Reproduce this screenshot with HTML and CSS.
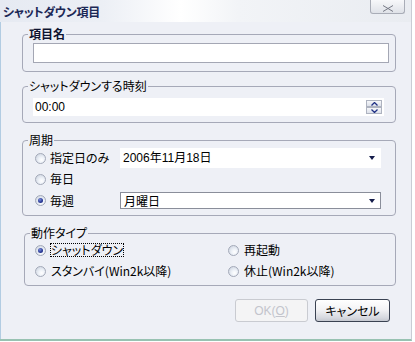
FILE: index.html
```html
<!DOCTYPE html>
<html lang="ja">
<head>
<meta charset="utf-8">
<link rel="stylesheet" href="styles.css">
</head>
<body>
<div class="window">
  <div class="titlebar">
    <span class="title">シャットダウン項目</span>
    <div class="close">
      <svg width="12" height="7" viewBox="0 0 12 7"><path d="M1 0.5 L11 6.5 M11 0.5 L1 6.5" stroke="#777b86" stroke-width="1" fill="none"/></svg>
    </div>
  </div>
  <div class="client">
    <fieldset class="group g1">
      <legend class="bold">項目名</legend>
      <div class="textbox"></div>
    </fieldset>

    <fieldset class="group g2">
      <legend>シャットダウンする時刻</legend>
      <div class="timebox">
        <span class="num">00:00</span>
        <div class="spin">
          <span class="spinbtn"><svg width="7" height="4" viewBox="0 0 7 4"><path d="M0.5 3.5 L3.5 0.5 L6.5 3.5" stroke="#1e2f84" stroke-width="1.3" fill="none"/></svg></span>
          <span class="spinbtn"><svg width="7" height="4" viewBox="0 0 7 4"><path d="M0.5 0.5 L3.5 3.5 L6.5 0.5" stroke="#1e2f84" stroke-width="1.3" fill="none"/></svg></span>
        </div>
      </div>
    </fieldset>

    <fieldset class="group g3">
      <legend>周期</legend>
      <div class="row row1">
        <span class="radio"></span><span class="rlabel">指定日のみ</span>
        <div class="combo flat"><span class="num">2006年11月18日</span><span class="arrow"></span></div>
      </div>
      <div class="row row2">
        <span class="radio"></span><span class="rlabel">毎日</span>
      </div>
      <div class="row row3">
        <span class="radio on"></span><span class="rlabel">毎週</span>
        <div class="combo boxed"><span>月曜日</span><span class="arrow"></span></div>
      </div>
    </fieldset>

    <fieldset class="group g4">
      <legend>動作タイプ</legend>
      <div class="opts">
        <div class="opt"><span class="radio on"></span><span class="olabel focus">シャットダウン</span></div>
        <div class="opt"><span class="radio"></span><span class="olabel">再起動</span></div>
        <div class="opt"><span class="radio"></span><span class="olabel">スタンバイ(Win2k以降)</span></div>
        <div class="opt"><span class="radio"></span><span class="olabel">休止(Win2k以降)</span></div>
      </div>
    </fieldset>

    <div class="buttons">
      <div class="btn ok disabled">OK(<u>O</u>)</div>
      <div class="btn cancel">キャンセル</div>
    </div>
  </div>
</div>
</body>
</html>
```

FILE: styles.css
```css
* { box-sizing: border-box; }
html, body { margin: 0; padding: 0; background: #ffffff; }
body {
  font-family: "Noto Sans CJK JP", sans-serif;
  font-size: 12px;
  color: #000;
  font-feature-settings: "palt";
}
.num { font-family: "Liberation Sans", "Noto Sans CJK JP", sans-serif; }

.window {
  width: 412px;
  height: 341px;
  border-right: 1px solid #c9ccd4;
  border-bottom: 2px solid #98c2b2;
  background: #eef0f6;
  display: flex;
  flex-direction: column;
}

.titlebar {
  height: 22px;
  display: flex;
  justify-content: space-between;
  align-items: flex-start;
  background: linear-gradient(90deg, #e6eaf2 0%, #eceff5 25%, #ffffff 44%, #f2f4f7 58%, #e9ecf1 100%);
}
.title {
  font-weight: bold;
  font-size: 12px;
  line-height: 14px;
  color: #1c2856;
  padding: 5px 0 0 3px;
  letter-spacing: -0.3px;
}
.close {
  width: 35px;
  height: 14px;
  margin-right: 6px;
  border: 1px solid #a9adb7;
  border-top: none;
  border-radius: 0 0 3px 3px;
  background: linear-gradient(#f7f8fa, #dfe2e8);
  display: flex;
  align-items: flex-end;
  justify-content: center;
  padding-bottom: 1px;
}

.client {
  flex: 1;
  border-left: 1px solid #b2cce2;
  padding: 5px 0 0 21px;
  display: flex;
  flex-direction: column;
}

.group {
  margin: 0;
  padding: 0;
  width: 374px;
  min-width: 0;
  border: 1px solid #a6a9b8;
  border-radius: 4px;
}
.group legend {
  margin-left: 5px;
  padding: 0 1px;
  height: 14px;
  line-height: 14px;
  color: #000;
}
.group legend.bold { font-weight: bold; color: #0e1430; }

.g1 { padding-bottom: 8px; }
.textbox {
  margin: 2px 0 0 10px;
  width: 356px;
  height: 20px;
  border: 1px solid #a4a7b4;
  background: #fff;
}

.g2 { margin-top: 7px; padding-bottom: 6px; }
.timebox {
  margin: 5px 0 0 10px;
  width: 351px;
  height: 18px;
  background: #fff;
  display: flex;
  align-items: center;
  justify-content: space-between;
  padding: 0 2px 0 2px;
  line-height: 14px;
}
.spin { display: flex; flex-direction: column; gap: 0; }
.spinbtn {
  width: 16px;
  height: 7px;
  border: 1px solid #aeb3c0;
  background: linear-gradient(#f6f7fa, #dde1ea);
  display: flex;
  align-items: center;
  justify-content: center;
}
.spinbtn + .spinbtn { margin-top: 0; }

.g3 { margin-top: 10px; padding-bottom: 6px; }
.row { display: flex; align-items: center; }
.row1 { height: 20px; margin-top: 1px; }
.row2 { height: 22px; }
.row3 { height: 17px; margin-top: 2px; }
.radio {
  position: relative;
  flex: none;
  width: 11px;
  height: 11px;
  border-radius: 50%;
  border: 1px solid #a3a9b8;
  background: radial-gradient(circle at 62% 66%, #ffffff 0%, #eef2f8 35%, #c6cedb 100%);
}
.radio.on::after {
  content: "";
  position: absolute;
  left: 2px;
  top: 2px;
  width: 5px;
  height: 5px;
  border-radius: 50%;
  background: radial-gradient(circle at 40% 35%, #7c8ed8 0%, #2a3a98 55%, #18226a 100%);
}
.row .radio { margin-left: 12px; }
.rlabel { margin-left: 4px; width: 70px; line-height: 14px; }
.combo {
  width: 261px;
  display: flex;
  align-items: center;
  justify-content: space-between;
  background: #fff;
  line-height: 14px;
}
.combo.flat { height: 20px; padding: 0 6px 0 3px; }
.combo.boxed { height: 17px; border: 1px solid #8a8e9a; padding: 0 5px 0 3px; }
.arrow {
  width: 0;
  height: 0;
  border-left: 3.5px solid transparent;
  border-right: 3.5px solid transparent;
  border-top: 4px solid #141c4a;
}

.g4 { margin-top: 10px; margin-left: 2px; width: 372px; padding-bottom: 7px; }
.opts {
  display: grid;
  grid-template-columns: 193px 1fr;
  row-gap: 7px;
  padding-left: 10px;
  margin-top: 3px;
}
.opt { display: flex; align-items: center; height: 14px; }
.olabel { margin-left: 4px; line-height: 14px; padding: 0 1px; }
.olabel.focus { outline: 1px dotted #000; outline-offset: -1px; }

.buttons {
  display: flex;
  gap: 7px;
  margin-top: 13px;
  padding-left: 213px;
}
.btn {
  height: 23px;
  border-radius: 3px;
  display: flex;
  align-items: center;
  justify-content: center;
  line-height: 14px;
}
.btn.ok {
  width: 73px;
  border: 1px solid #c9cbd1;
  background: #f4f4f5;
  color: #c3c4cc;
  font-family: "Liberation Sans", sans-serif;
}
.btn.ok u { text-decoration: underline; }
.btn.cancel {
  width: 75px;
  border: 1px solid #3a4252;
  background: linear-gradient(#ffffff 0%, #f3f3f5 45%, #d6d8df 85%, #c5c8d0 100%);
}
```
